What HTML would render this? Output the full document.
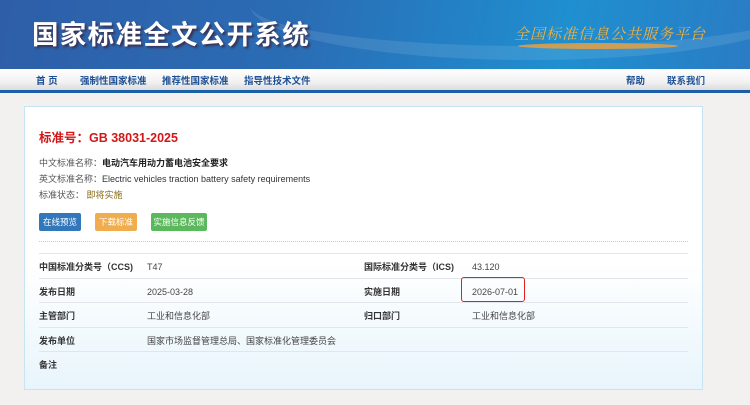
<!DOCTYPE html><html><head><meta charset="utf-8"><style>
*{margin:0;padding:0;box-sizing:border-box}
body{width:750px;height:405px;overflow:hidden;background:#f2f1ef;font-family:"Liberation Sans","Noto Sans CJK SC",sans-serif;position:relative}
.hd{position:absolute;left:0;top:0;width:750px;height:69px;background:linear-gradient(100deg,#2e5ea8 0%,#2a6db5 40%,#1f8fd0 75%,#2a7cc4 100%);overflow:hidden}
.hd .sw{position:absolute;left:250px;top:-50px;width:560px;height:110px;border-radius:50%;border-bottom:14px solid rgba(255,255,255,.10)}
.t1{position:absolute;left:32px;top:19px;color:#fff;font-size:26.5px;font-weight:bold;letter-spacing:1.3px;text-shadow:2px 2px 2px #3a3050;line-height:32px}
.t2{position:absolute;left:514px;top:25px;color:#f0b040;font-size:15px;font-family:"Noto Serif CJK SC",serif;font-style:italic;letter-spacing:1px;line-height:18px}
.t2b{position:absolute;left:518px;top:43px;width:160px;height:6px;background:#e8a040;border-radius:50%;opacity:.85}
.nav{position:absolute;left:0;top:69px;width:750px;height:24px;background:linear-gradient(#fff,#f2f2f2 60%,#dcdcdc);border-bottom:3px solid #1a5fa8}
.nav span{position:absolute;top:7px;font-size:9.5px;font-weight:bold;color:#1d4f95;line-height:12px}
.card{position:absolute;left:24px;top:106px;width:679px;height:284px;border:1px solid #c8e4f2;background:linear-gradient(#fff 55%,#e8f5fc)}
.abs{position:absolute;white-space:nowrap;line-height:12px}
.lab{font-size:9px;color:#555}
.btn{position:absolute;top:106px;height:18px;border-radius:2px;color:#fff;font-size:8.5px;text-align:center;line-height:18px}
.row{position:absolute;left:14px;width:649px;border-top:1px solid #e2e6ea}
.k{font-size:9px;font-weight:bold;color:#333}
.v{font-size:9px;color:#444}
</style></head><body>
<div class="hd"><div class="sw"></div><div class="t1">国家标准全文公开系统</div><div class="t2b"></div><div class="t2">全国标准信息公共服务平台</div></div>
<div class="nav"><span style="left:36px">首 页</span><span style="left:80px">强制性国家标准</span><span style="left:162px">推荐性国家标准</span><span style="left:244px">指导性技术文件</span><span style="left:626px">帮助</span><span style="left:667px">联系我们</span></div>
<div class="card">
<div class="abs" style="left:14px;top:24px;color:#d01818;font-size:12.5px;font-weight:bold;line-height:15px">标准号：GB 38031-2025</div>
<div class="abs lab" style="left:14px;top:50px">中文标准名称：<b style="color:#222">电动汽车用动力蓄电池安全要求</b></div>
<div class="abs lab" style="left:14px;top:66px">英文标准名称：<span style="color:#333">Electric vehicles traction battery safety requirements</span></div>
<div class="abs lab" style="left:14px;top:82px">标准状态：&nbsp;<span style="color:#8a6a1a">即将实施</span></div>
<div class="btn" style="left:14px;width:42px;background:#3377bb">在线预览</div>
<div class="btn" style="left:70px;width:42px;background:#f0ad4e">下载标准</div>
<div class="btn" style="left:126px;width:56px;background:#5cb85c">实施信息反馈</div>
<div class="row" style="top:134px;border-top:1px dotted #ccc"></div>
<div class="row" style="top:146px"></div>
<div class="row" style="top:171px"></div>
<div class="row" style="top:195px"></div>
<div class="row" style="top:220px"></div>
<div class="row" style="top:244px"></div>
<div class="abs k" style="left:14px;top:154px">中国标准分类号（CCS)</div><div class="abs v" style="left:122px;top:154px">T47</div>
<div class="abs k" style="left:339px;top:154px">国际标准分类号（ICS)</div><div class="abs v" style="left:447px;top:154px">43.120</div>
<div class="abs k" style="left:14px;top:179px">发布日期</div><div class="abs v" style="left:122px;top:179px">2025-03-28</div>
<div class="abs k" style="left:339px;top:179px">实施日期</div><div class="abs v" style="left:447px;top:179px">2026-07-01</div>
<div class="abs" style="left:436px;top:170px;width:64px;height:25px;border:1.5px solid #e02020;border-radius:3px"></div>
<div class="abs k" style="left:14px;top:203px">主管部门</div><div class="abs v" style="left:122px;top:203px">工业和信息化部</div>
<div class="abs k" style="left:339px;top:203px">归口部门</div><div class="abs v" style="left:447px;top:203px">工业和信息化部</div>
<div class="abs k" style="left:14px;top:228px">发布单位</div><div class="abs v" style="left:122px;top:228px">国家市场监督管理总局、国家标准化管理委员会</div>
<div class="abs k" style="left:14px;top:252px">备注</div>
</div>
</body></html>
